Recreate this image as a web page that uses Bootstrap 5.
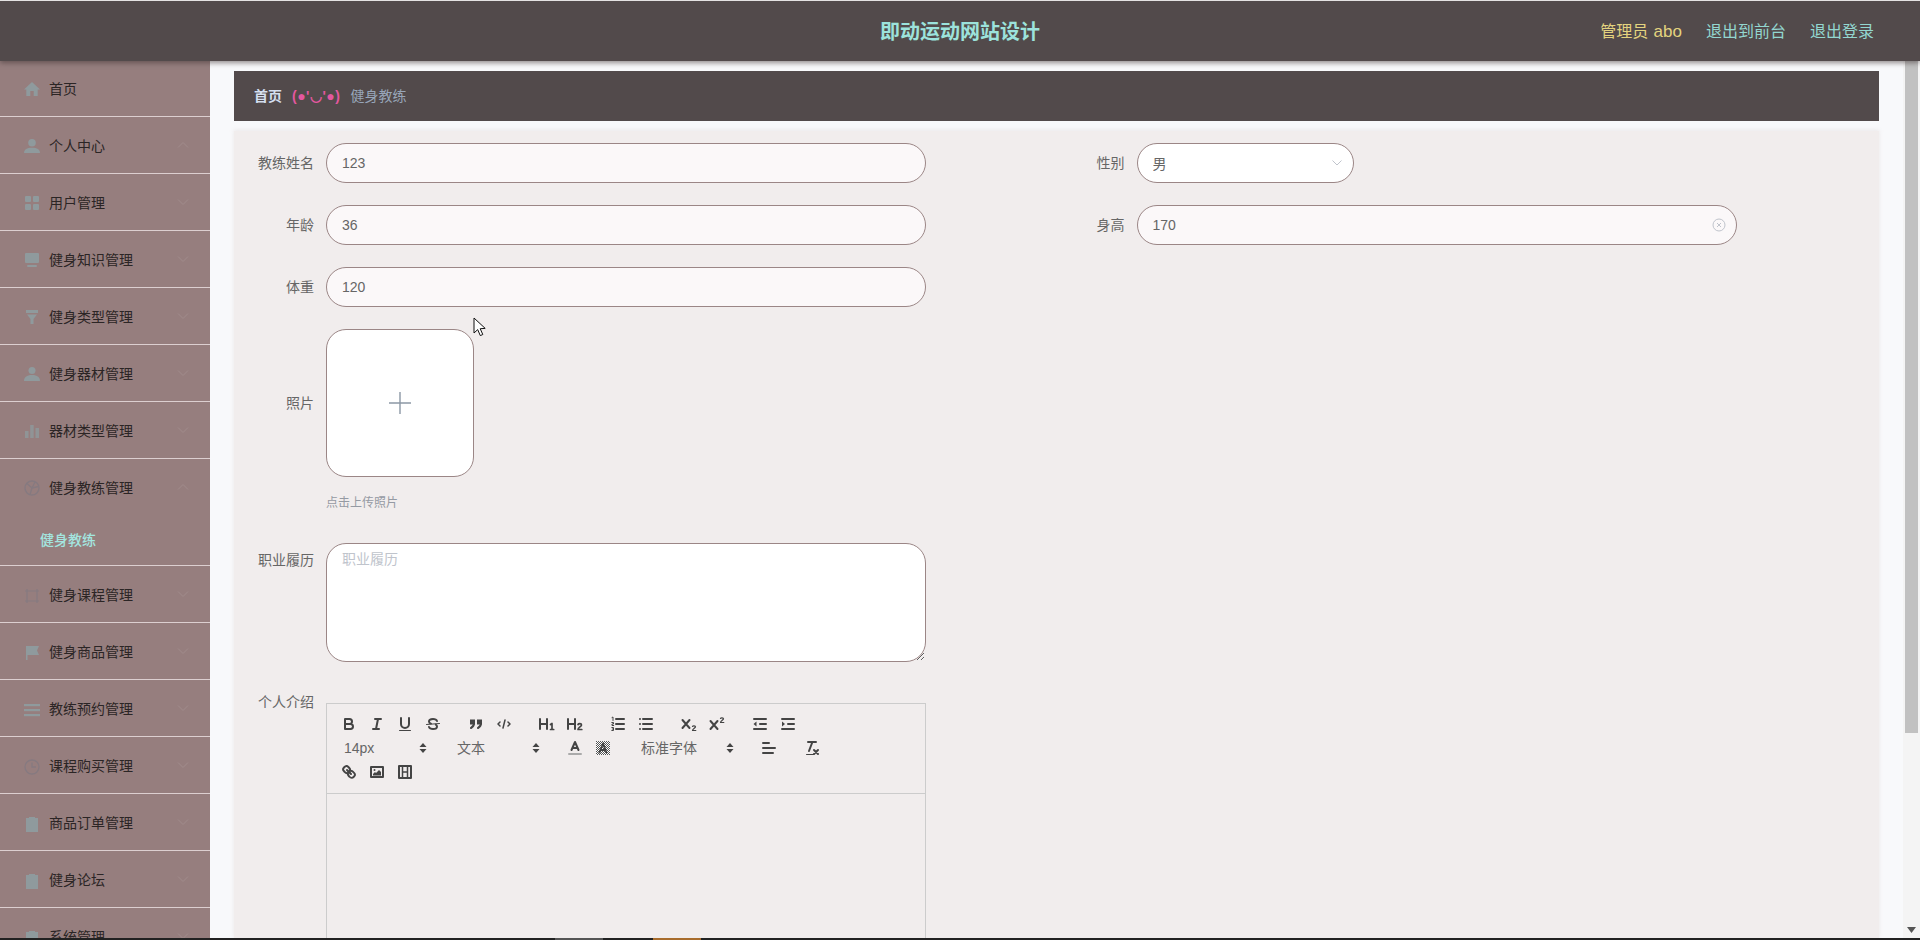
<!DOCTYPE html>
<html lang="zh-CN">
<head>
<meta charset="utf-8">
<title>即动运动网站设计</title>
<link href="https://cdn.jsdelivr.net/npm/bootstrap@5.3.0/dist/css/bootstrap.min.css" rel="stylesheet">
<style>
html,body{height:940px;overflow:hidden}
body{font-family:"Liberation Sans","Noto Sans CJK SC",sans-serif;font-size:14px;background:#f8f9fb;color:#666}
.shell{height:938px}
.topbar{height:61px;flex:none;background:#524a4b;border-top:1px solid #e4e2e2;box-shadow:0 2px 5px rgba(60,50,50,.55);position:relative;z-index:5;padding:1px 46px 0 0}
.site-title{position:absolute;left:0;right:0;top:0;line-height:62px;text-align:center;font-size:20px;font-weight:700;color:#9ce3dc}
.top-user{color:#e3d37f;font-size:16px;margin-right:24px;word-spacing:1px}
.top-abo{font-size:17px}
.top-link{color:#93d7d0;font-size:16px;margin-left:24px;text-decoration:none}
.side{width:210px;flex:none;background:#967e7e;overflow:hidden}
.side-row{height:57px;border-bottom:1px solid #dccfd0;flex-wrap:nowrap}
.side-row:first-child{height:56px}
.side-open{height:107px}
.side-link{height:56px;padding:2px 0 0 25px;color:#2b2525;gap:10px;display:flex;align-items:center;position:relative}
.side-row:first-child .side-link{padding-top:0}
.side-open~.side-row .side-link{padding-top:3px}
.side-ico{width:14px;height:16px;flex:none;color:#8f9a9d}
.side-ico svg{display:block;width:16px;height:16px;margin-left:-1px}
.side-chev{position:absolute;left:177px;top:24px;width:12px;height:8px;color:#a18c8c}
.side-sub{height:50px;line-height:50px;padding-left:40px;color:#a3e6e0;font-weight:500}
.work{min-width:0;overflow:hidden;padding:10px 24px 0}
.crumbs{height:50px;background:#524a4b;padding-left:20px;flex:none;gap:10px;font-size:14px}
.crumb-home{color:#d4dff0;font-weight:700}
.crumb-sep{color:#e4579f;font-weight:700;letter-spacing:.5px}
.crumb-now{color:#98a6b9}
.sheet{margin-top:10px;background:#f1eded;padding-top:12px;flex:1 1 auto;box-shadow:0 -1px 4px rgba(215,205,205,.4);min-height:0}
.fld-row{display:flex;margin-bottom:22px}
.fld-left{margin-left:12px}
.fld-label{width:68px;margin-right:12px;text-align:right;line-height:40px;flex:none;white-space:nowrap}
.fld-box{position:relative}
.w-wide{width:600px}
.w-short{width:217px}
.pill.form-control{height:40px;border-radius:20px;border:1px solid #9b8686;background:#fbf8f9;color:#666;font-size:14px;padding:0 15px;box-shadow:none}
.pill-white.form-control{background:#fff}
.over-ico{position:absolute;display:block}
.uploader{width:148px;height:148px;border:1px solid #9b8686;border-radius:20px;background:#fff}
.hint{margin:16px 0 30px 92px;line-height:20px;font-size:12px;color:#959aa3}
.note.form-control{width:600px;height:119px;border-radius:20px;border:1px solid #9b8686;background:#fff;font-size:14px;padding:5px 15px;color:#666;box-shadow:none}
.note.form-control::placeholder{color:#c0c4cc}
.label-note{line-height:34px}
.edit{margin-top:21px;width:600px;margin-left:0;border:1px solid #ccc;height:400px}
.edit-bar{border-bottom:1px solid #ccc;padding:8px;height:90px;align-content:flex-start}
.tool-grp{display:flex;margin-right:15px}
.tool{width:28px;height:24px;padding:3px 5px;flex:none}
.tool svg{display:block;width:18px;height:18px;fill:none;stroke:#444;stroke-width:2;stroke-linecap:round;stroke-linejoin:round}
.tool svg .fine{stroke-width:1}
.tool svg .ink{fill:#444;stroke:none}
.tool svg pattern{stroke:none}
.tool svg .dither{stroke:none}
.picker{height:24px;line-height:24px;padding-left:9px;color:#666;position:relative;font-size:14px}
.pick-a{width:98px}
.pick-b{width:108px}
.pick-arrow{position:absolute;right:6px;top:6px;width:8px;height:12px;fill:#444}
.rail{width:17px;flex:none;background:#f4f4f4;padding:0 2px 0;position:relative}
.rail-thumb{height:672px;background:#c1c1c1}
.rail-down{position:absolute;left:4px;bottom:5px;width:9px;height:6px;fill:#555}
.taskline{height:2px;background:#222;flex:none}
.task-a{position:absolute;left:555px;bottom:0;width:48px;height:2px;background:#555}
.task-b{position:absolute;left:653px;bottom:0;width:48px;height:2px;background:#a86c2c}
.pointer{position:absolute;left:473px;top:317px;width:14px;height:20px;z-index:9}
</style>
</head>
<body>
<div class="shell d-flex flex-column">
  <header class="topbar d-flex align-items-center justify-content-end">
    <div class="site-title">即动运动网站设计</div>
    <span class="top-user">管理员 <span class="top-abo">abo</span></span>
    <a class="top-link ms-0" href="#">退出到前台</a>
    <a class="top-link" href="#">退出登录</a>
  </header>
  <div class="d-flex flex-grow-1" style="min-height:0">
    <aside class="side">
      <ul class="nav flex-column flex-nowrap">
        <li class="side-row"><div class="side-link"><span class="side-ico"><svg viewBox="0 0 16 16" fill="currentColor"><path d="M8 1 0 8.500h2.300V15h4V10h3.400v5h4V8.500H16z"/></svg></span>首页</div></li>
        <li class="side-row"><div class="side-link"><span class="side-ico"><svg viewBox="0 0 16 16" fill="currentColor"><circle cx="8" cy="4.800" r="3.800"/><path d="M0 15c0-3.500 3-5.300 8-5.300s8 1.800 8 5.300z"/></svg></span>个人中心<svg class="side-chev" viewBox="0 0 12 8" fill="none" stroke="currentColor"><path d="m1 6.500 5-5 5 5"/></svg></div></li>
        <li class="side-row"><div class="side-link"><span class="side-ico"><svg viewBox="0 0 16 16" fill="currentColor"><rect x="1" y="1" width="6" height="6" rx="1"/><rect x="9" y="1" width="6" height="6" rx="1"/><rect x="1" y="9" width="6" height="6" rx="1"/><rect x="9" y="9" width="6" height="6" rx="1"/></svg></span>用户管理<svg class="side-chev" viewBox="0 0 12 8" fill="none" stroke="currentColor"><path d="m1 1.500 5 5 5-5"/></svg></div></li>
        <li class="side-row"><div class="side-link"><span class="side-ico"><svg viewBox="0 0 16 16" fill="currentColor"><rect x="1" y="1" width="14" height="10" rx="1"/><rect x="3" y="13" width="10" height="2" rx="1"/></svg></span>健身知识管理<svg class="side-chev" viewBox="0 0 12 8" fill="none" stroke="currentColor"><path d="m1 1.500 5 5 5-5"/></svg></div></li>
        <li class="side-row"><div class="side-link"><span class="side-ico"><svg viewBox="0 0 16 16" fill="currentColor"><path d="M2 1h12v3H2zM3 5.500h10L9.500 10v5h-3v-5z"/></svg></span>健身类型管理<svg class="side-chev" viewBox="0 0 12 8" fill="none" stroke="currentColor"><path d="m1 1.500 5 5 5-5"/></svg></div></li>
        <li class="side-row"><div class="side-link"><span class="side-ico"><svg viewBox="0 0 16 16" fill="currentColor"><circle cx="8" cy="4.500" r="3.500"/><path d="M0 15c0-3.500 2.500-6 8-6s8 2.500 8 6z"/></svg></span>健身器材管理<svg class="side-chev" viewBox="0 0 12 8" fill="none" stroke="currentColor"><path d="m1 1.500 5 5 5-5"/></svg></div></li>
        <li class="side-row"><div class="side-link"><span class="side-ico"><svg viewBox="0 0 16 16" fill="currentColor" opacity=".8"><rect x="1" y="8" width="3.500" height="7"/><rect x="6.200" y="2" width="3.500" height="13"/><rect x="11.500" y="5" width="3.500" height="10"/></svg></span>器材类型管理<svg class="side-chev" viewBox="0 0 12 8" fill="none" stroke="currentColor"><path d="m1 1.500 5 5 5-5"/></svg></div></li>
        <li class="side-row side-open"><div class="side-link"><span class="side-ico" style="color:#867a80"><svg viewBox="0 0 16 16" fill="none" stroke="currentColor" stroke-width="1.400"><circle cx="8" cy="8" r="7"/><path d="M3 3.500 8 8l-2 6.500M8 8l6.500-1.500M8 8l3-6"/></svg></span>健身教练管理<svg class="side-chev" viewBox="0 0 12 8" fill="none" stroke="currentColor"><path d="m1 6.500 5-5 5 5"/></svg></div><div class="side-sub">健身教练</div></li>
        <li class="side-row"><div class="side-link"><span class="side-ico" style="color:#867a80"><svg viewBox="0 0 16 16" fill="none" stroke="currentColor" stroke-width="1.200"><path d="M1 3h14M3 1v14M13 1v14M1 13h14"/></svg></span>健身课程管理<svg class="side-chev" viewBox="0 0 12 8" fill="none" stroke="currentColor"><path d="m1 1.500 5 5 5-5"/></svg></div></li>
        <li class="side-row"><div class="side-link"><span class="side-ico"><svg viewBox="0 0 16 16" fill="currentColor"><path d="M2 1h13l-2 4.500 2 4.500H3.500v5H2z"/></svg></span>健身商品管理<svg class="side-chev" viewBox="0 0 12 8" fill="none" stroke="currentColor"><path d="m1 1.500 5 5 5-5"/></svg></div></li>
        <li class="side-row"><div class="side-link"><span class="side-ico"><svg viewBox="0 0 16 16" fill="currentColor"><rect x="0" y="2" width="16" height="2.200"/><rect x="0" y="7" width="16" height="2.200"/><rect x="0" y="12" width="16" height="2.200"/></svg></span>教练预约管理<svg class="side-chev" viewBox="0 0 12 8" fill="none" stroke="currentColor"><path d="m1 1.500 5 5 5-5"/></svg></div></li>
        <li class="side-row"><div class="side-link"><span class="side-ico" style="color:#867a80"><svg viewBox="0 0 16 16" fill="none" stroke="currentColor" stroke-width="1.300"><circle cx="8" cy="8" r="7"/><path d="M8 3.500V8h4"/></svg></span>课程购买管理<svg class="side-chev" viewBox="0 0 12 8" fill="none" stroke="currentColor"><path d="m1 1.500 5 5 5-5"/></svg></div></li>
        <li class="side-row"><div class="side-link"><span class="side-ico"><svg viewBox="0 0 16 16" fill="currentColor"><path d="M2 2h3V1h6v1h3v14H2z"/></svg></span>商品订单管理<svg class="side-chev" viewBox="0 0 12 8" fill="none" stroke="currentColor"><path d="m1 1.500 5 5 5-5"/></svg></div></li>
        <li class="side-row"><div class="side-link"><span class="side-ico"><svg viewBox="0 0 16 16" fill="currentColor"><path d="M2 2h3V1h6v1h3v14H2z"/></svg></span>健身论坛<svg class="side-chev" viewBox="0 0 12 8" fill="none" stroke="currentColor"><path d="m1 1.500 5 5 5-5"/></svg></div></li>
        <li class="side-row"><div class="side-link"><span class="side-ico"><svg viewBox="0 0 16 16" fill="currentColor"><path d="M2 2h3V1h6v1h3v14H2z"/></svg></span>系统管理<svg class="side-chev" viewBox="0 0 12 8" fill="none" stroke="currentColor"><path d="m1 1.500 5 5 5-5"/></svg></div></li>
      </ul>
    </aside>
    <main class="work flex-grow-1 d-flex flex-column">
      <div class="crumbs d-flex align-items-center">
        <span class="crumb-home">首页</span><span class="crumb-sep">(●'◡'●)</span><span class="crumb-now">健身教练</span>
      </div>
      <section class="sheet">
        <div class="row g-0">
          <div class="col-6">
            <div class="fld-row fld-left"><label class="fld-label">教练姓名</label><div class="fld-box w-wide"><input class="form-control pill" value="123"></div></div>
            <div class="fld-row fld-left"><label class="fld-label">年龄</label><div class="fld-box w-wide"><input class="form-control pill" value="36"></div></div>
            <div class="fld-row fld-left"><label class="fld-label">体重</label><div class="fld-box w-wide"><input class="form-control pill" value="120"></div></div>
          </div>
          <div class="col-6">
            <div class="fld-row"><label class="fld-label">性别</label><div class="fld-box w-short"><input class="form-control pill pill-white" value="男"><svg class="over-ico" style="right:11px;top:15px;width:12px;height:10px" viewBox="0 0 12 10" fill="none" stroke="#c0c4cc"><path d="m1.500 2.500 4.500 4.500 4.500-4.500"/></svg></div></div>
            <div class="fld-row"><label class="fld-label">身高</label><div class="fld-box w-wide"><input class="form-control pill" value="170"><svg class="over-ico" style="right:11px;top:13px;width:14px;height:14px" viewBox="0 0 14 14" fill="none" stroke="#c0c4cc"><circle cx="7" cy="7" r="6"/><path d="m5 5 4 4m0-4-4 4"/></svg></div></div>
          </div>
        </div>
        <div class="fld-row fld-left mb-0"><label class="fld-label" style="line-height:148px">照片</label><div class="uploader d-flex align-items-center justify-content-center"><svg width="24" height="24" viewBox="0 0 24 24" stroke="#8c98a5" stroke-width="1.400"><path d="M12 1v22M1 12h22"/></svg></div></div>
        <div class="hint">点击上传照片</div>
        <div class="fld-row fld-left" style="margin-bottom:20px"><label class="fld-label label-note">职业履历</label><textarea class="form-control note" placeholder="职业履历"></textarea></div>
        <div class="fld-row fld-left mb-0"><label class="fld-label">个人介绍</label>
          <div class="edit">
            <div class="edit-bar d-flex flex-wrap">
              <span class="tool-grp">
                <span class="tool"><svg viewBox="0 0 18 18"><path d="M5 4h4.500a2.500 2.500 0 0 1 0 5H5zM5 9h5.500a2.500 2.500 0 0 1 0 5H5z"/></svg></span>
                <span class="tool"><svg viewBox="0 0 18 18"><path d="M7 4h6M5 14h6M8 14l2-10"/></svg></span>
                <span class="tool"><svg viewBox="0 0 18 18"><path d="M5 3v6a4 4 0 0 0 8 0V3"/><rect class="ink" x="3" y="15" width="12" height="1" rx=".5"/></svg></span>
                <span class="tool"><svg viewBox="0 0 18 18"><path class="fine" d="M15.500 8.500 2.500 9.500"/><path d="M13 6c-.5-1.300-2-2-4-2-2.500 0-4 1-4 2.500 0 1 .6 1.700 2 2.100M5 12c.5 1.300 2 2 4 2 2.500 0 4-1 4-2.500 0-.9-.4-1.500-1.200-1.900"/></svg></span>
              </span>
              <span class="tool-grp">
                <span class="tool"><svg viewBox="0 0 18 18"><rect class="ink" x="3" y="4.500" width="5" height="5"/><rect class="ink" x="10" y="4.500" width="5" height="5"/><path d="M7 8c0 3.500-3 5-3 5M14 8c0 3.500-3 5-3 5"/></svg></span>
                <span class="tool"><svg viewBox="0 0 18 18"><path style="stroke-width:1.500" d="M5 7 3 9l2 2M13 7l2 2-2 2M10 5l-2 8"/></svg></span>
              </span>
              <span class="tool-grp">
                <span class="tool"><svg viewBox="0 0 18 18"><path d="M2 4v10M9 4v10M2 9h7"/><path style="stroke-width:1.700" d="M12.500 9.500 14 8.500V14M12.500 14.500h3.200"/></svg></span>
                <span class="tool"><svg viewBox="0 0 18 18"><path d="M2 4v10M9 4v10M2 9h7"/><path style="stroke-width:1.700" d="M12 9.500c.5-1 3.500-1.500 3.500.5 0 1.500-3.500 2.500-3.500 4.500h3.800"/></svg></span>
              </span>
              <span class="tool-grp">
                <span class="tool"><svg viewBox="0 0 18 18"><path d="M7 4h8M7 9h8M7 14h8"/><path class="fine" d="M3 2.500 4 2v3.500M2.800 7.500h1.700v1.500H3v1.500h1.700M2.800 12.500h1.700v3H2.800M3.300 14h1"/></svg></span>
                <span class="tool"><svg viewBox="0 0 18 18"><path d="M6 4h9M6 9h9M6 14h9M3 4h0M3 9h0M3 14h0"/></svg></span>
              </span>
              <span class="tool-grp">
                <span class="tool"><svg viewBox="0 0 18 18"><path d="M2.500 5l7 8M9.500 5l-7 8"/><path class="fine" style="stroke-width:1.200" d="M12.500 11.500c.3-1 3-1 3 .3 0 1.200-3 1.800-3 3.700h3.300"/></svg></span>
                <span class="tool"><svg viewBox="0 0 18 18"><path d="M2.500 6l7 8M9.500 6l-7 8"/><path class="fine" style="stroke-width:1.200" d="M12.500 3.500c.3-1 3-1 3 .3 0 1.200-3 1.800-3 3.700h3.300"/></svg></span>
              </span>
              <span class="tool-grp">
                <span class="tool"><svg viewBox="0 0 18 18"><path d="M3 14h12M3 4h12M9 9h6"/><path class="ink" d="M5.500 6.500v5L2.500 9z"/></svg></span>
                <span class="tool"><svg viewBox="0 0 18 18"><path d="M3 14h12M3 4h12M9 9h6"/><path class="ink" d="M3 6.500v5L6 9z"/></svg></span>
              </span>
              <span class="tool-grp"><span class="picker pick-a">14px<svg class="pick-arrow" viewBox="0 0 8 12"><path d="M4 1 7.500 5h-7zM4 11 .500 7h7z"/></svg></span></span>
              <span class="tool-grp"><span class="picker pick-a">文本<svg class="pick-arrow" viewBox="0 0 8 12"><path d="M4 1 7.500 5h-7zM4 11 .500 7h7z"/></svg></span></span>
              <span class="tool-grp">
                <span class="tool"><svg viewBox="0 0 18 18"><path d="M5.500 11 9 3l3.500 8M6.400 9h5.200"/><path style="stroke:#aaa" d="M3 15h12"/></svg></span>
                <span class="tool"><svg viewBox="0 0 18 18"><defs><pattern id="hatch" width="2" height="2" patternUnits="userSpaceOnUse"><rect class="dither" width="2" height="2" fill="#fff"/><rect class="dither" width="1" height="1" fill="#555"/><rect class="dither" x="1" y="1" width="1" height="1" fill="#555"/></pattern></defs><rect class="dither" x="2" y="2" width="14" height="14" fill="url(#hatch)"/><path style="stroke-width:1.800" d="M5.500 13.500 9 4.500l3.500 9M6.400 11h5.200"/></svg></span>
              </span>
              <span class="tool-grp"><span class="picker pick-b">标准字体<svg class="pick-arrow" viewBox="0 0 8 12"><path d="M4 1 7.500 5h-7zM4 11 .500 7h7z"/></svg></span></span>
              <span class="tool-grp"><span class="tool"><svg viewBox="0 0 18 18"><path d="M3 9h12M3 14h10M3 4h6"/></svg></span></span>
              <span class="tool-grp">
                <span class="tool"><svg viewBox="0 0 18 18"><path d="M5 3h8M6 12l3.400-9M11 11l4 4M15 11l-4 4"/><rect class="ink" x="3" y="15" width="8" height="1" rx=".5"/></svg></span>
              </span>
              <span class="tool-grp">
                <span class="tool"><svg viewBox="0 0 18 18"><path d="M7 7l4 4"/><path d="M8.900 4.600a3.500 3.500 0 0 1 .4 4.700 3.500 3.500 0 0 1-4.700-.4C3.200 7.500 2 6.400 4.200 4.200s3.300-1 4.700.4zM13.400 9.100a3.500 3.500 0 0 0-4.700-.4 3.500 3.500 0 0 0 .4 4.700c1.400 1.400 2.500 2.500 4.700.4s1-3.300-.4-4.700z"/></svg></span>
                <span class="tool"><svg viewBox="0 0 18 18"><rect x="3" y="4" width="12" height="10"/><circle class="ink" cx="6.500" cy="7" r="1"/><path class="ink" d="M5 12.500V11l2-2 1 1 3-3 2 2v3.500z"/></svg></span>
                <span class="tool"><svg viewBox="0 0 18 18"><rect x="3" y="3" width="12" height="12"/><path style="stroke-width:1.500;stroke-linecap:butt" d="M6.500 3v12M11.500 3v12M6.500 9h5"/></svg></span>
              </span>
            </div>
          </div>
        </div>
      </section>
    </main>
    <div class="rail">
      <div class="rail-thumb"></div>
      <svg class="rail-down" viewBox="0 0 9 6"><path d="M0 0h9L4.500 6z"/></svg>
    </div>
  </div>
</div>
<div class="taskline"></div>
<span class="task-a"></span><span class="task-b"></span>
<svg class="pointer" viewBox="0 0 14 20"><path d="M1 1v15l3.700-3.400 2.600 6 2.500-1.100-2.600-5.800 5-.3z" fill="#fff" stroke="#111" stroke-width="1"/></svg>
</body>
</html>
